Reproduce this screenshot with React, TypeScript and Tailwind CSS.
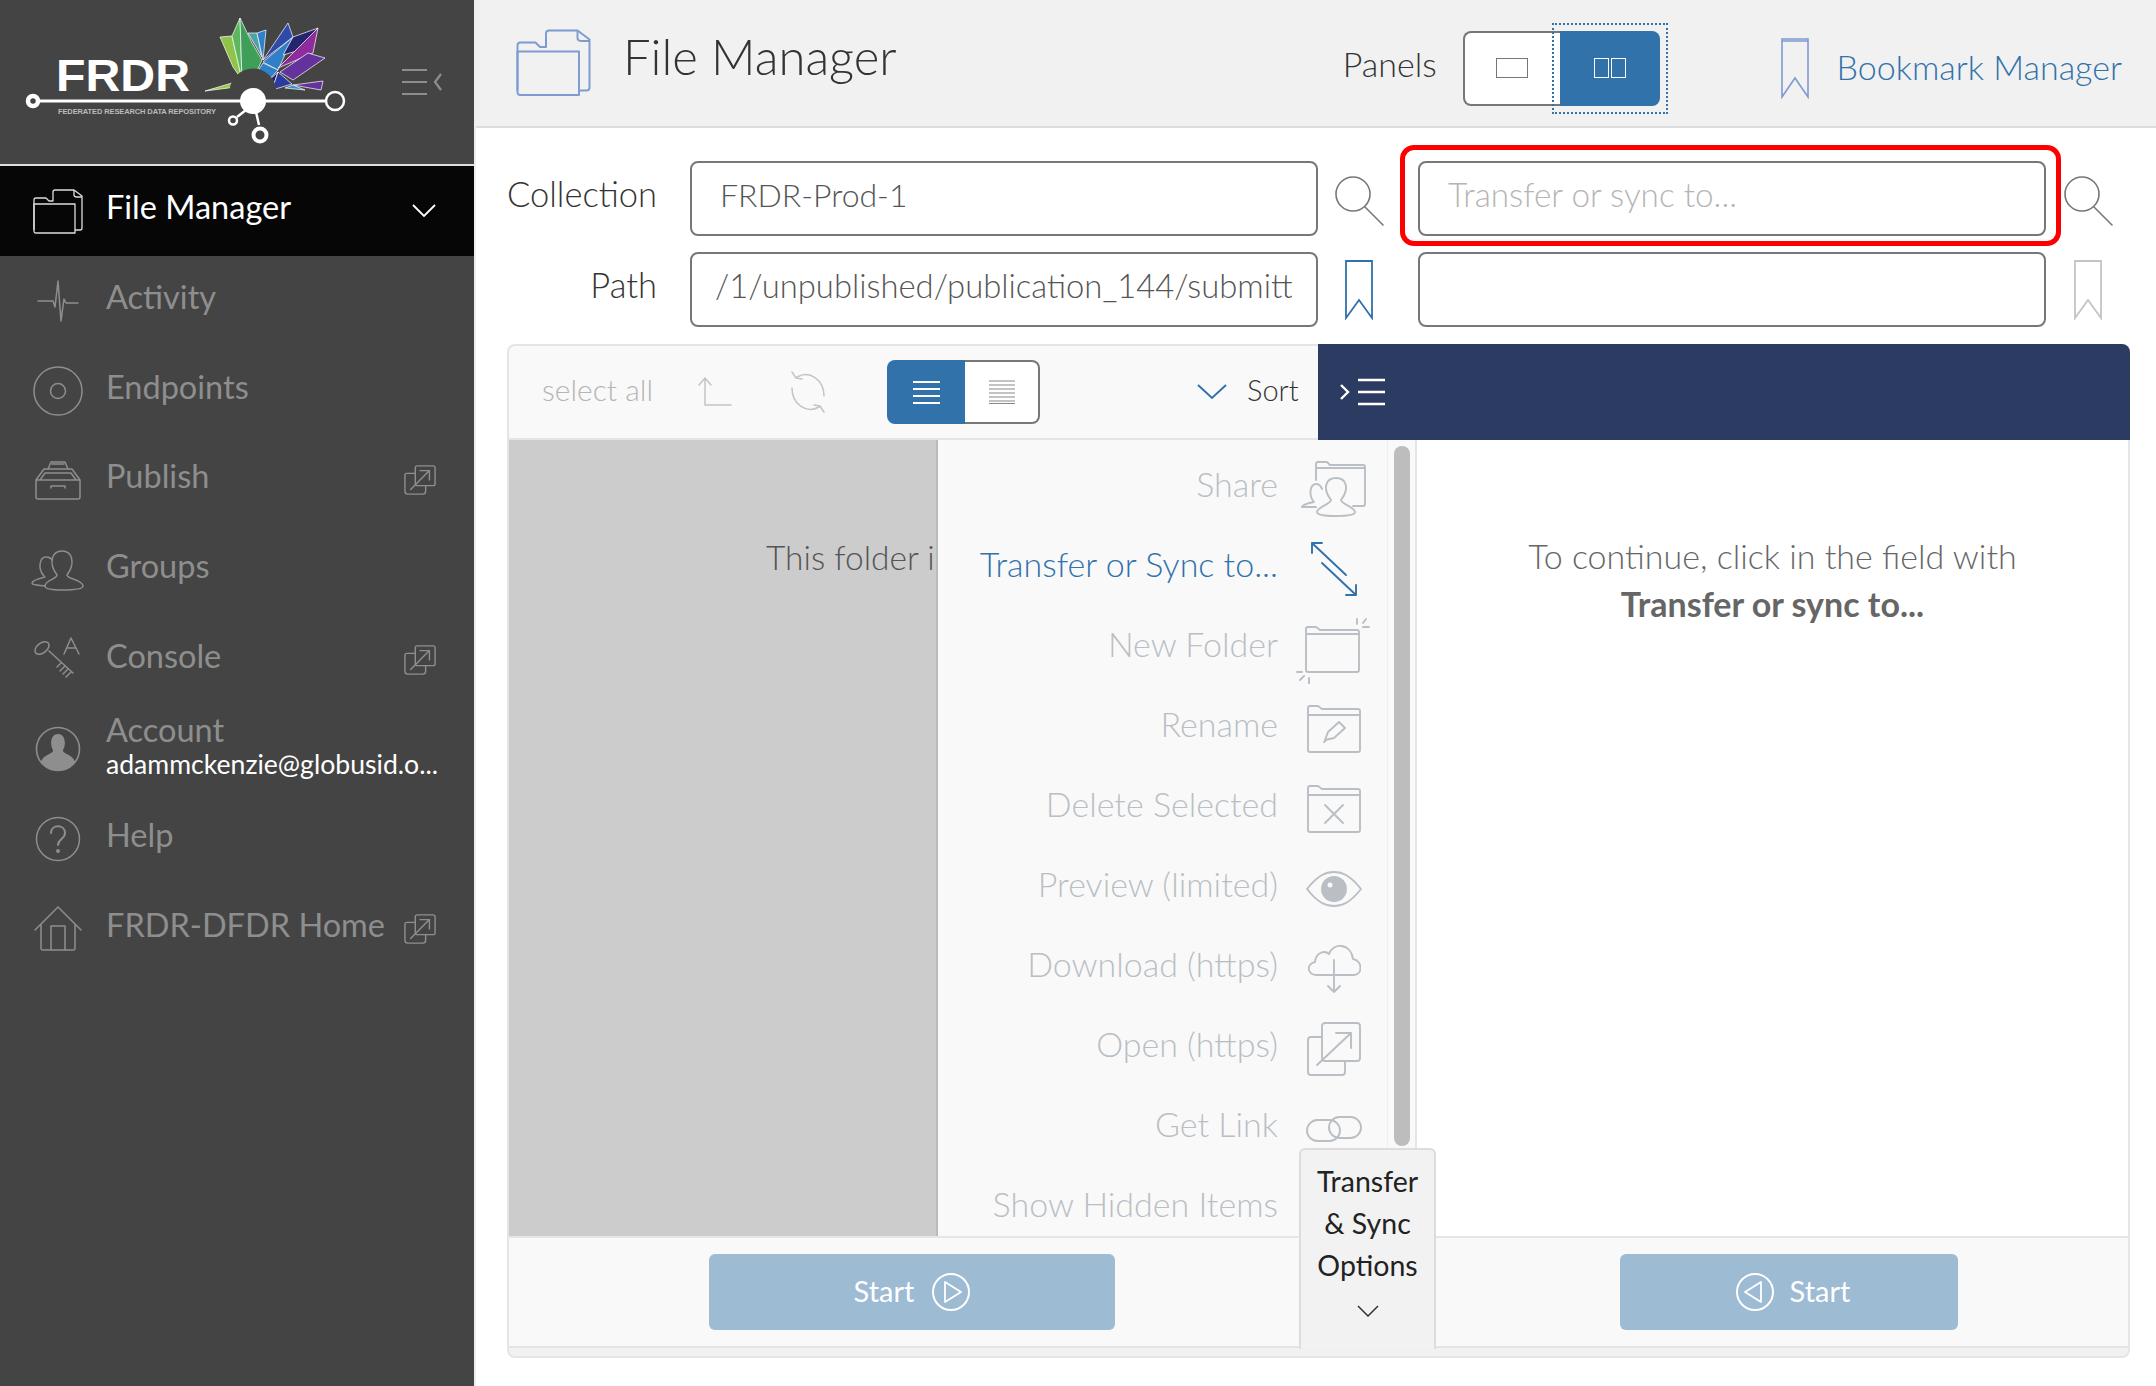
import type { ReactNode } from "react";

const Svg = ({ w, h, className, children }: { w: number; h: number; className?: string; children: ReactNode }) => (
  <svg width={w} height={h} viewBox={`0 0 ${w} ${h}`} fill="none" stroke="currentColor" strokeWidth={1.5} strokeLinecap="round" strokeLinejoin="round" className={`shrink-0 ${className ?? ""}`}>
    {children}
  </svg>
);

function Logo() {
  const leaf: [string, string][] = [
    ["#8fc34a", "220,37 232,36 242,80 233,67"],
    ["#5cb85c", "240,18 232,36 242,80"],
    ["#3f9f58", "240,18 252,43 262,60 253,80 242,80"],
    ["#4ba3a8", "248,33 257,33 262,57"],
    ["#2f80c8", "257,33 266,30 263,60"],
    ["#2f4aa8", "263,60 288,23 293,37"],
    ["#2f80c8", "263,62 293,37 278,70"],
    ["#2f80c8", "263,63 278,70 267,82 252,80"],
    ["#25256e", "293,37 318,28 300,50 283,55"],
    ["#8e2c9e", "318,28 313,53 278,68"],
    ["#64329c", "308,53 325,58 293,80 280,72"],
    ["#25256e", "278,72 267,82 272,90"],
    ["#2b3ba0", "278,72 292,84 272,90"],
    ["#9bc64a", "205,91 242,80 236,87"],
    ["#64329c", "293,85 323,81 321,90"],
    ["#3f8fd0", "285,88 293,85 305,90"],
  ];
  return (
    <svg width={360} height={150} viewBox="0 0 360 150" className="shrink-0">
      {leaf.map(([fill, points]) => (
        <polygon key={points} points={points} fill={fill} stroke="#fff" strokeWidth={0.7} strokeLinejoin="round" />
      ))}
      <path d="M231 92 A22 22 0 0 1 275 92" fill="#444" stroke="#444" strokeWidth={3} />
      <text x={56} y={91} fill="#fff" fontFamily="Liberation Sans" fontWeight={700} fontSize={44} textLength={134} lengthAdjust="spacingAndGlyphs">FRDR</text>
      <text x={58} y={114} fill="#bbb" fontFamily="Liberation Sans" fontSize={7.5} fontWeight={700} textLength={158}>FEDERATED RESEARCH DATA REPOSITORY</text>
      <path d="M33 101 H326" stroke="#fff" strokeWidth={3} />
      <circle cx={33} cy={101} r={5} fill="#444" stroke="#fff" strokeWidth={4.5} />
      <circle cx={253} cy={101} r={13} fill="#fff" />
      <circle cx={335} cy={101} r={9} fill="#444" stroke="#fff" strokeWidth={2.5} />
      <path d="M246 110 L237 117 M256 112 L259 125" stroke="#fff" strokeWidth={2.5} />
      <circle cx={233} cy={120.5} r={4} fill="#444" stroke="#fff" strokeWidth={2.5} />
      <circle cx={260} cy={135} r={6.5} fill="#444" stroke="#fff" strokeWidth={4} />
    </svg>
  );
}

const FolderDoc = ({ w = 52, h = 46 }: { w?: number; h?: number }) => (
  <svg width={w} height={h} viewBox="0 0 52 46" fill="none" stroke="currentColor" strokeWidth={1.3} strokeLinejoin="round" className="shrink-0">
    <path d="M1 42 V12 Q1 10 3 10 H13 L16 13 H20 V4 Q20 2 22 2 H41 L49 8 V40 Q49 42 47 42 H42" />
    <path d="M41 2 V7 Q41 9 44 9 H49" />
    <path d="M1 16 H42 V45 H3 Q1 45 1 43 Z" />
  </svg>
);

const External = () => (
  <svg width={32} height={32} viewBox="0 0 34 34" fill="none" stroke="#8e8e8e" strokeWidth={1.5} strokeLinecap="round" strokeLinejoin="round" className="shrink-0">
    <rect x={12} y={2} width={21} height={21} rx={2} />
    <path d="M12 10 H3 Q1 10 1 12 V29 Q1 32 4 32 H20 Q23 32 23 29 V23" />
    <path d="M7 27 L27 7 M17 7 H27 V17" />
  </svg>
);

const navIcons: Record<string, ReactNode> = {
  Activity: (
    <Svg w={42} h={42}>
      <path d="M1 21 H16 L18 27 L21 1 L24 41 L27 19 L29 23 H41" />
    </Svg>
  ),
  Endpoints: (
    <Svg w={50} h={50}>
      <circle cx={25} cy={25} r={24} />
      <circle cx={25} cy={25} r={7.5} />
    </Svg>
  ),
  Publish: (
    <Svg w={48} h={42}>
      <path d="M2 21 V38 Q2 40 4 40 H44 Q46 40 46 38 V21 Z M2 21 L10 10 H38 L46 21 M6 21 L11 14 H37 L42 21" />
      <path d="M14 10 L17 3 H31 L34 10 M18 5 H30 M17 29 V27 H31 V29" />
    </Svg>
  ),
  Groups: (
    <Svg w={54} h={42}>
      <path d="M14 28 C2 31 1 33 1 34 C1 36 6 36 14 37" />
      <path d="M13 27 C6 19 9 8 15 8 C18 8 20 9 21 11" />
      <path d="M26 26 C17 14 21 2 31 2 C41 2 45 14 36 26 C36 30 52 31 52 37 C52 41 35 41 31 41 C27 41 14 41 14 37 C14 31 26 30 26 26 Z" />
    </Svg>
  ),
  Console: (
    <Svg w={50} h={46}>
      <ellipse cx={9} cy={11} rx={8} ry={5} transform="rotate(-38 9 11)" />
      <path d="M16 14 L40 36 M28 26 L24 30 M32 29 L27 34 M35 32 L30 37 M38 35 L33 40" />
      <path d="M31 17 L38 1 L46 17 M34 11 H43" />
    </Svg>
  ),
  Account: (
    <svg width={46} height={46} viewBox="0 0 46 46" className="shrink-0">
      <circle cx={23} cy={23} r={21.5} fill="none" stroke="currentColor" strokeWidth={1.6} />
      <path d="M23 8 C31 8 31 20 28 24 C27 28 38 28 40 36 A21 21 0 0 1 6 36 C8 28 19 28 18 24 C15 20 15 8 23 8 Z" fill="currentColor" />
    </svg>
  ),
  Help: (
    <Svg w={46} h={46}>
      <circle cx={23} cy={23} r={21.5} />
      <path d="M16 17 C16 8 30 8 30 17 C30 23 23 23 23 29" strokeWidth={2} />
      <circle cx={23} cy={35} r={1.2} fill="currentColor" />
    </Svg>
  ),
  "FRDR-DFDR Home": (
    <Svg w={48} h={46}>
      <path d="M1 24 L24 1 L47 24 M7 19 V42 Q7 44 9 44 H39 Q41 44 41 42 V19 M17 44 V20 H31 V44" />
    </Svg>
  ),
};

const navItems = [
  { label: "Activity" },
  { label: "Endpoints" },
  { label: "Publish", ext: true },
  { label: "Groups" },
  { label: "Console", ext: true },
  { label: "Account", sub: "adammckenzie@globusid.o..." },
  { label: "Help" },
  { label: "FRDR-DFDR Home", ext: true },
];

function Sidebar() {
  return (
    <aside className="w-[474px] shrink-0 bg-[#444444] min-h-[1386px]">
      <div className="h-[164px] flex items-start justify-between pr-[32px]">
        <Logo />
        <svg width={40} height={28} viewBox="0 0 40 28" fill="none" stroke="#8e8e8e" strokeWidth={2.2} className="mt-[68px] shrink-0">
          <path d="M0 2 H25 M0 14 H25 M0 26 H25 M39 6 L33 14 L39 22" />
        </svg>
      </div>
      <div className="h-[92px] bg-[#060606] border-t-2 border-[#dddddd] flex items-center pl-[33px] pr-[38px] text-white">
        <div className="text-[#dddddd]"><FolderDoc /></div>
        <span className="ml-[21px] pb-[8px] text-[32.5px] leading-none flex-1">File Manager</span>
        <svg width={24} height={14} viewBox="0 0 24 14" fill="none" stroke="#fff" strokeWidth={1.8}><path d="M1 1 L12 12 L23 1" /></svg>
      </div>
      <nav>
        {navItems.map((item) => (
          <div key={item.label} className="h-[89.7px] flex items-center text-[#8e8e8e]">
            <div className="w-[106px] shrink-0 flex justify-center pl-[10px]">{navIcons[item.label]}</div>
            <div className="flex-1 min-w-0 pb-[8px]">
              <div className="text-[32.5px] leading-[38px]">{item.label}</div>
              {item.sub && <div className="text-[26.6px] leading-[30px] text-white whitespace-nowrap">{item.sub}</div>}
            </div>
            {item.ext && <div className="mr-[38px]"><External /></div>}
          </div>
        ))}
      </nav>
    </aside>
  );
}

function TopBar() {
  return (
    <header className="h-[128px] bg-[#f1f1f1] border-b-2 border-[#dddddd] flex items-center pl-[40px] pr-[34px]">
      <div className="text-[#7e9bd0] -mt-[2px]"><FolderDoc w={78} h={70} /></div>
      <h1 className="ml-[29px] text-[49px] font-light text-[#333] leading-none -mt-[14px]">File Manager</h1>
      <span className="ml-auto text-[34px] font-light text-[#333]">Panels</span>
      <div className="ml-[26px] mt-[10px] h-[75px] w-[197px] flex relative">
        <div className="w-[97px] bg-white border-2 border-[#777] border-r-0 rounded-l-lg flex items-center justify-center">
          <div className="w-[32px] h-[20px] border border-[#777]" />
        </div>
        <div className="flex-1 bg-[#3172ab] rounded-r-lg flex items-center justify-center gap-[2px]">
          <div className="w-[15px] h-[20px] border border-white" />
          <div className="w-[15px] h-[20px] border border-white" />
        </div>
        <div className="absolute left-[89px] -top-[8px] w-[116px] h-[91px] border-2 border-dotted border-[#3172ab]" />
      </div>
      <svg width={28} height={62} viewBox="0 0 28 62" fill="none" stroke="#7e9bd0" strokeWidth={1.6} className="ml-[121px] mt-[9px]"><path d="M1 2 H27 V60 L14 41 L1 60 Z M1 4 H27" /></svg>
      <span className="ml-[28px] mt-[6px] text-[34px] text-[#3172ab] font-light whitespace-nowrap">Bookmark Manager</span>
    </header>
  );
}

const SearchIcon = ({ className }: { className?: string }) => (
  <Svg w={50} h={50} className={className}>
    <circle cx={18} cy={18} r={17} strokeWidth={1.6} />
    <path d="M30 31 L48 49" strokeWidth={1.6} />
  </Svg>
);

const Bookmark = ({ className }: { className: string }) => (
  <svg width={28} height={60} viewBox="0 0 28 60" fill="none" stroke="currentColor" strokeWidth={1.8} className={`shrink-0 ${className}`}><path d="M1 1 H27 V58 L14 40 L1 58 Z" /></svg>
);

const inputClass = "w-[628px] h-[75px] bg-white border-2 border-[#777] rounded-lg text-[32px] font-light flex items-center whitespace-nowrap pb-[8px]";
const labelClass = "w-[150px] pb-[8px] text-right text-[34.5px] leading-none font-light text-[#333] whitespace-nowrap";

function AddressRows() {
  return (
    <div className="flex flex-col gap-[16px] pt-[33px]">
      <div className="flex items-center">
        <label className={labelClass}>Collection</label>
        <div className={`${inputClass} ml-[33px] pl-[28px] text-[#555]`}>FRDR-Prod-1</div>
        <SearchIcon className="ml-[17px] text-[#777] mt-[4px]" />
        <div className="relative ml-[33px]">
          <div className={`${inputClass} pl-[28px] text-[33.3px] text-[#b5b5b5]`}>Transfer or sync to...</div>
          <div className="absolute -left-[18px] -right-[15px] -top-[16px] -bottom-[10px] border-[5px] border-[#ff0000] rounded-[14px]" />
        </div>
        <SearchIcon className="ml-[18px] text-[#777] mt-[4px]" />
      </div>
      <div className="flex items-center">
        <label className={labelClass}>Path</label>
        <div className={`${inputClass} ml-[33px] pl-[23px] pr-[24px] text-[#555]`}>
          <span className="block overflow-hidden text-[32.8px]">/1/unpublished/publication_144/submitted</span>
        </div>
        <Bookmark className="ml-[27px] text-[#3172ab]" />
        <div className={`${inputClass} ml-[45px]`} />
        <Bookmark className="ml-[28px] text-[#c4c4c4]" />
      </div>
    </div>
  );
}

function Toolbar() {
  return (
    <div className="h-[96px] flex">
      <div className="w-[811px] shrink-0 bg-[#f9f9f9] border-2 border-r-0 border-[#e3e6e9] rounded-tl-lg flex items-center pl-[33px]">
        <span className="pb-[5px] text-[30px] font-light text-[#b5b5b5]">select all</span>
        <Svg w={38} h={30} className="ml-[42px] text-[#c4c4c4]">
          <path d="M4 8 L10 1 L16 8 M10 1 V28 H36" />
        </Svg>
        <Svg w={40} h={44} className="ml-[55px] text-[#c4c4c4]">
          <path d="M36 26 C36 10 22 0 9 7 M4 2 L8 8 L14 9 M4 18 C4 34 18 44 31 37 M36 42 L32 36 L26 35" />
        </Svg>
        <div className="ml-[59px] h-[64px] w-[153px] flex">
          <div className="w-[78px] bg-[#3172ab] rounded-l-lg flex items-center justify-center">
            <svg width={27} height={23} viewBox="0 0 27 23" stroke="#fff" strokeWidth={2}><path d="M0 1 H27 M0 8 H27 M0 15 H27 M0 22 H27" /></svg>
          </div>
          <div className="flex-1 bg-white border-2 border-l-0 border-[#777] rounded-r-lg flex items-center justify-center">
            <svg width={26} height={24} viewBox="0 0 26 24" stroke="#888" strokeWidth={1.2}><path d="M0 1 H26 M0 5 H26 M0 9 H26 M0 13 H26 M0 17 H26 M0 21 H26 M0 23.5 H26" /></svg>
          </div>
        </div>
        <svg width={30} height={16} viewBox="0 0 30 16" fill="none" stroke="#3172ab" strokeWidth={2} className="ml-[157px]"><path d="M1 1 L15 14 L29 1" /></svg>
        <span className="ml-[20px] pb-[5px] text-[29px] font-light text-[#333]">Sort</span>
      </div>
      <div className="flex-1 bg-[#2b3b62] rounded-tr-lg flex items-center pl-[22px]">
        <svg width={45} height={28} viewBox="0 0 45 28" fill="none" stroke="#fff" strokeWidth={2.4}><path d="M1 7 L8 14 L1 21 M18 2 H45 M18 14 H45 M18 26 H45" /></svg>
      </div>
    </div>
  );
}

const menuItems: { label: string; active?: boolean; icon: ReactNode }[] = [
  {
    label: "Share",
    icon: (
      <Svg w={66} h={58}>
        <path d="M15 20 V4 Q15 2 17 2 H26 L29 5 H62 Q64 5 64 7 V44 Q64 46 62 46 H52 M15 8 H64" />
        <path d="M13 42 C3 44 1 46 1 47 H15 M12 41 C7 33 10 24 15 24 C18 24 20 26 21 29" />
        <path d="M30 40 C21 28 25 18 35 18 C45 18 49 28 40 40 C40 44 54 47 54 52 C54 56 40 56 35 56 C30 56 16 56 16 52 C16 47 30 44 30 40 Z" />
      </Svg>
    ),
  },
  {
    label: "Transfer or Sync to...",
    active: true,
    icon: (
      <Svg w={48} h={60}>
        <path d="M2 4 L36 36 M2 14 V4 H12" />
        <path d="M12 24 L46 56 M36 56 H46 V46" />
      </Svg>
    ),
  },
  {
    label: "New Folder",
    icon: (
      <Svg w={76} h={66} className="mt-[4px]">
        <path d="M10 52 V11 Q10 9 12 9 H20 L24 12 H61 Q63 12 63 14 V52 Q63 54 61 54 H12 Q10 54 10 52 Z M10 16 H63" />
        <path d="M70 1 L67 5 M73 9 H67 M61 1 V6 M1 54 H6 M4 62 L8 58 M13 66 V60" />
      </Svg>
    ),
  },
  {
    label: "Rename",
    icon: (
      <Svg w={54} h={50}>
        <path d="M1 46 V4 Q1 2 3 2 H11 L15 5 H51 Q53 5 53 7 V46 Q53 48 51 48 H3 Q1 48 1 46 Z M1 11 H53" />
        <path d="M18 36 L21 28 L32 18 L38 24 L27 34 Z M17 38 L19 36" />
      </Svg>
    ),
  },
  {
    label: "Delete Selected",
    icon: (
      <Svg w={54} h={50}>
        <path d="M1 46 V4 Q1 2 3 2 H11 L15 5 H51 Q53 5 53 7 V46 Q53 48 51 48 H3 Q1 48 1 46 Z M1 11 H53" />
        <path d="M18 21 L36 39 M36 21 L18 39" />
      </Svg>
    ),
  },
  {
    label: "Preview (limited)",
    icon: (
      <svg width={56} height={36} viewBox="0 0 56 36" fill="none" stroke="currentColor" strokeWidth={1.5} className="shrink-0">
        <path d="M1 18 C12 4 20 1 28 1 C36 1 44 4 55 18 C44 32 36 35 28 35 C20 35 12 32 1 18 Z" />
        <circle cx={28} cy={18} r={12} fill="currentColor" />
        <circle cx={24} cy={14} r={2.5} fill="#f9f9f9" stroke="none" />
      </svg>
    ),
  },
  {
    label: "Download (https)",
    icon: (
      <Svg w={54} h={50}>
        <path d="M10 31 C0 31 -1 20 8 18 C9 8 18 6 22 10 C26 -2 44 -1 46 15 C56 17 56 31 46 31 H10 Z" />
        <path d="M27 16 V48 M21 42 L27 48 L33 42" />
      </Svg>
    ),
  },
  {
    label: "Open (https)",
    icon: (
      <Svg w={54} h={54}>
        <rect x={15} y={1} width={38} height={38} rx={3} />
        <path d="M15 15 H4 Q1 15 1 18 V50 Q1 53 4 53 H35 Q38 53 38 50 V39" />
        <path d="M10 43 L44 11 M29 11 H44 V26" />
      </Svg>
    ),
  },
  {
    label: "Get Link",
    icon: (
      <Svg w={56} h={26}>
        <rect x={1} y={4} width={33} height={21} rx={10.5} />
        <rect x={23} y={1} width={32} height={21} rx={10.5} />
      </Svg>
    ),
  },
  { label: "Show Hidden Items", icon: null },
];

function FileMenu() {
  return (
    <div className="absolute left-[427px] top-0 bottom-0 w-[451px] bg-[#f9f9f9] border-l-2 border-[#bbbbbb] overflow-hidden pt-[4px]">
      {menuItems.map((item) => (
        <div key={item.label} className={`h-[80px] flex items-center ${item.active ? "text-[#3172ab]" : "text-[#b9bfc4]"}`}>
          <span className="w-[340px] shrink-0 pb-[2px] text-right text-[34px] font-light whitespace-nowrap">{item.label}</span>
          <div className="w-[111px] shrink-0 pt-[10px] flex justify-center [&_svg]:stroke-[1.9]">{item.icon}</div>
        </div>
      ))}
    </div>
  );
}

function PanelBody() {
  return (
    <div className="h-[796px] flex border-x-2 border-[#e3e6e9]">
      <div className="w-[908px] shrink-0 relative bg-[#cccccc] overflow-hidden border-r-2 border-[#e3e6e9]">
        <p className="text-center text-[33.5px] font-light text-[#555] pt-[92px] pr-[109px]">This folder is empty</p>
        <FileMenu />
        <div className="absolute left-[878px] top-0 bottom-0 w-[28px] bg-[#f9f9f9] border-l border-[#eeeeee]">
          <div className="ml-[6px] mt-[6px] w-[16px] h-[700px] bg-[#bdbdbd] rounded-full" />
        </div>
      </div>
      <div className="flex-1 bg-white text-center text-[34px] font-light text-[#666] leading-[48px] pt-[92px]">
        <p>To continue, click in the field with</p>
        <p className="font-bold">Transfer or sync to...</p>
      </div>
    </div>
  );
}

function StartButton({ dir, className }: { dir: "left" | "right"; className: string }) {
  const icon = (
    <Svg w={38} h={38} className="text-white">
      <circle cx={19} cy={19} r={18} strokeWidth={2} />
      <path d={dir === "right" ? "M13 9 L29 19 L13 29 Z" : "M25 9 L9 19 L25 29 Z"} strokeWidth={1.8} />
    </Svg>
  );
  return (
    <button className={`h-[76px] bg-[#9ebbd4] rounded-md flex items-center justify-center text-white text-[29px] ${dir === "left" ? "gap-[16px] pl-[8px]" : "gap-[18px]"} ${className}`}>
      {dir === "left" && icon}
      <span className="pb-[3px]">Start</span>
      {dir === "right" && icon}
    </button>
  );
}

function Footer() {
  return (
    <div className="relative">
      <div className="h-[112px] bg-[#f9f9f9] border-2 border-[#e3e6e9] flex items-center">
        <div className="w-[926px] pl-[200px]"><StartButton dir="right" className="w-[406px]" /></div>
        <div className="pl-[185px]"><StartButton dir="left" className="w-[338px]" /></div>
      </div>
      <div className="h-[10px] bg-[#f1f1f1] border-x-2 border-b-2 border-[#e3e6e9] rounded-b-lg" />
      <div className="absolute left-[792px] bottom-[9px] w-[137px] h-[201px] bg-[#f2f2f2] border-2 border-b-0 border-[#dddddd] rounded-t-md text-center text-[28.5px] text-[#222] leading-[42px] pt-[10px]">
        <p>Transfer</p>
        <p>&amp; Sync</p>
        <p>Options</p>
        <svg width={22} height={12} viewBox="0 0 22 12" fill="none" stroke="#333" strokeWidth={1.5} className="mx-auto mt-[19px]"><path d="M1 1 L11 11 L21 1" /></svg>
      </div>
    </div>
  );
}

export default function App() {
  return (
    <div className="flex w-[2156px] h-[1386px] overflow-hidden bg-white font-[Lato,sans-serif]">
      <Sidebar />
      <main className="flex-1 border-l-2 border-[#eeeeee] min-w-0">
        <TopBar />
        <div className="pl-[31px] pr-[26px]">
          <AddressRows />
          <div className="mt-[17px]">
            <Toolbar />
            <PanelBody />
            <Footer />
          </div>
        </div>
      </main>
    </div>
  );
}
